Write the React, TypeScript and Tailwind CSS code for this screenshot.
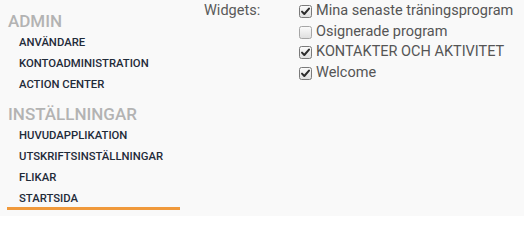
const adminLinks = ["Användare", "Kontoadministration", "Action center"];
const settingsLinks = ["Huvudapplikation", "Utskriftsinställningar", "Flikar", "Startsida"];

const widgets = [
  { label: "Mina senaste träningsprogram", checked: true },
  { label: "Osignerade program", checked: false },
  { label: "KONTAKTER OCH AKTIVITET", checked: true },
  { label: "Welcome", checked: true },
];

function CheckBox({ checked }: { checked: boolean }) {
  return (
    <svg width="13" height="13" viewBox="0 0 13 13" className="shrink-0">
      <defs>
        <linearGradient id="cbg" x1="0" y1="0" x2="0" y2="1">
          <stop offset="0" stopColor="#fcfcfc" />
          <stop offset="1" stopColor="#dedede" />
        </linearGradient>
      </defs>
      <rect x="0.5" y="0.5" width="12" height="12" rx="2" fill="url(#cbg)" stroke={checked ? "#7a7a7a" : "#a6a6a6"} />
      {checked && (
        <path d="M3 6.6 L5.3 9 L10 3.6" fill="none" stroke="#2b2b2b" strokeWidth="2" strokeLinecap="round" strokeLinejoin="round" />
      )}
    </svg>
  );
}

function Section({ title, links, active }: { title: string; links: string[]; active?: string }) {
  return (
    <div>
      <h2 className="pl-px text-[17px] leading-[22px] font-medium uppercase text-[#b3b3b3]">{title}</h2>
      <ul>
        {links.map((link) =>
          link === active ? (
            <li key={link} className="mt-[2px] border-b-[3px] border-[#f0993b] pl-3 text-[11.3px] leading-[17px] font-medium uppercase text-[#1f2b39]">
              {link}
            </li>
          ) : (
            <li key={link} className="pl-3 text-[11.3px] leading-[21px] font-medium uppercase text-[#1f2b39]">
              {link}
            </li>
          ),
        )}
      </ul>
    </div>
  );
}

export default function App() {
  return (
    <div className="flex h-[216px] w-[524px] bg-[#f9f9f9] font-['Roboto',sans-serif]">
      <nav className="ml-[7px] flex w-[173px] flex-col gap-[8.5px] pt-[9.8px]">
        <Section title="Admin" links={adminLinks} />
        <Section title="Inställningar" links={settingsLinks} active="Startsida" />
      </nav>
      <div className="ml-[24px] flex pt-[1px]">
        <div className="w-[95px] text-[14.5px] leading-[20.7px] text-[#5a5a5a]">Widgets:</div>
        <ul>
          {widgets.map((w) => (
            <li key={w.label} className="flex h-[20.7px] items-center gap-[4px] text-[14.5px] leading-[20.7px] text-[#555]">
              <CheckBox checked={w.checked} />
              <span>{w.label}</span>
            </li>
          ))}
        </ul>
      </div>
    </div>
  );
}
